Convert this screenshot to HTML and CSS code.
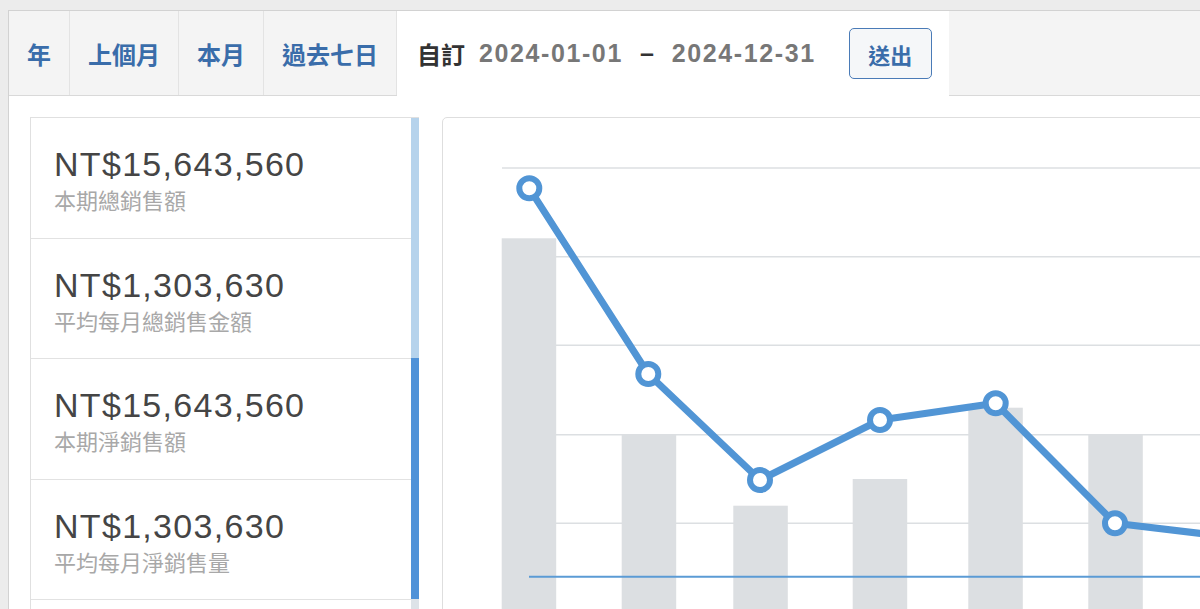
FILE: index.html
```html
<!DOCTYPE html>
<html lang="zh-Hant">
<head>
<meta charset="utf-8">
<title>銷售報表</title>
<link rel="stylesheet" href="styles.css">
</head>
<body>
<div class="panel">
  <nav class="tabs">
    <a class="tab">年</a>
    <a class="tab">上個月</a>
    <a class="tab">本月</a>
    <a class="tab">過去七日</a>
    <div class="tab tab-active">
      <span class="custom-label">自訂</span>
      <span class="date date-from">2024-01-01</span>
      <span class="dash">–</span>
      <span class="date date-to">2024-12-31</span>
      <button class="submit" type="button">送出</button>
    </div>
  </nav>
  <div class="content">
    <div class="stats">
      <ul class="stat-list">
        <li class="stat"><div class="value">NT$15,643,560</div><div class="label">本期總銷售額</div></li>
        <li class="stat"><div class="value">NT$1,303,630</div><div class="label">平均每月總銷售金額</div></li>
        <li class="stat"><div class="value">NT$15,643,560</div><div class="label">本期淨銷售額</div></li>
        <li class="stat"><div class="value">NT$1,303,630</div><div class="label">平均每月淨銷售量</div></li>
      </ul>
      <div class="scrollbar">
        <div class="track-top"></div>
        <div class="thumb"></div>
        <div class="track-rest"></div>
      </div>
    </div>
    <div class="chart-card">
      <svg class="chart" width="880" height="500" viewBox="0 0 880 500">
        <g class="grid" stroke="#dcdfe2" stroke-width="1.5">
          <line x1="59" y1="50" x2="880" y2="50"/>
          <line x1="59" y1="138.7" x2="880" y2="138.7"/>
          <line x1="59" y1="227.3" x2="880" y2="227.3"/>
          <line x1="59" y1="316.7" x2="880" y2="316.7"/>
          <line x1="59" y1="405.2" x2="880" y2="405.2"/>
          <line x1="59" y1="494" x2="880" y2="494"/>
        </g>
        <g class="bars" fill="#dcdfe2">
          <rect x="58.7" y="120.3" width="54.5" height="400"/>
          <rect x="178.7" y="317" width="54.5" height="400"/>
          <rect x="290.3" y="387.7" width="54.5" height="400"/>
          <rect x="409.7" y="361" width="54.5" height="400"/>
          <rect x="525.3" y="289.7" width="54.5" height="400"/>
          <rect x="645.3" y="317" width="54.5" height="400"/>
        </g>
        <line x1="86" y1="458.7" x2="880" y2="458.7" stroke="#5b9bd5" stroke-width="2"/>
        <polyline fill="none" stroke="#5195d5" stroke-width="7" stroke-linejoin="round" stroke-linecap="round"
          points="86.3,70.3 205.3,256 317,362 437,302 552.7,285.3 672,405.3 792,419.5"/>
        <g fill="#fff" stroke="#5195d5" stroke-width="6">
          <circle cx="86.3" cy="70.3" r="10"/>
          <circle cx="205.3" cy="256" r="10"/>
          <circle cx="317" cy="362" r="10"/>
          <circle cx="437" cy="302" r="10"/>
          <circle cx="552.7" cy="285.3" r="10"/>
          <circle cx="672" cy="405.3" r="10"/>
          <circle cx="792" cy="419.5" r="10"/>
        </g>
      </svg>
    </div>
  </div>
</div>
</body>
</html>
```

FILE: styles.css
```css
* {
  box-sizing: border-box;
}

html,
body {
  margin: 0;
  height: 100%;
  overflow: hidden;
}

body {
  background: #ececec;
  padding: 10px 0 0 8px;
  font-family: "Liberation Sans", "Noto Sans CJK TC", sans-serif;
}

.panel {
  width: 1400px;
  height: 640px;
  background: #fff;
  border: 1px solid #d2d2d2;
  display: flex;
  flex-direction: column;
}

/* tabs */
.tabs {
  flex: none;
  display: flex;
  height: 85px;
  background: #f4f4f4;
  border-bottom: 1px solid #d9d9d9;
}

.tab {
  display: flex;
  align-items: center;
  padding: 0 18px;
  border-right: 1px solid #e3e3e3;
  color: #3a6daa;
  font-size: 24px;
  font-weight: 700;
  text-decoration: none;
  white-space: nowrap;
}

.tab-active {
  background: #fff;
  border-right: none;
  height: 85px;
  margin-bottom: -1px;
  padding: 0 17px 0 20px;
  color: #333;
}

.custom-label {
  color: #333;
}

.date {
  color: #777;
  font-size: 25px;
  letter-spacing: 1.6px;
}

.date-from {
  margin-left: 14px;
}

.dash {
  color: #333;
  font-size: 25px;
  margin-left: 17px;
}

.date-to {
  margin-left: 18px;
}

.submit {
  margin-left: 33px;
  width: 83px;
  height: 51px;
  padding: 0;
  border: 1.5px solid #4a7bb7;
  border-radius: 5px;
  background: #f5f7f9;
  color: #3a6daa;
  font-family: "Liberation Sans", "Noto Sans CJK TC", sans-serif;
  font-size: 22px;
  font-weight: 700;
}

/* content */
.content {
  flex: 1;
  min-height: 0;
  display: flex;
  align-items: flex-start;
  gap: 23px;
  padding: 21px 0 0 21px;
}

.stats {
  flex: none;
  display: flex;
  width: 389px;
  height: 520px;
  border-top: 1px solid #e0e0e0;
  border-left: 1px solid #e0e0e0;
}

.stat-list {
  flex: 1;
  margin: 0;
  padding: 0;
  list-style: none;
}

.stat {
  height: 120.5px;
  padding: 26px 0 0 23px;
  border-bottom: 1px solid #e2e2e2;
}

.value {
  color: #454545;
  font-size: 34px;
  line-height: 40px;
  letter-spacing: 1.3px;
}

.label {
  margin-top: 5px;
  color: #a8a8a8;
  font-size: 22px;
  line-height: 26px;
}

.scrollbar {
  flex: none;
  width: 8px;
  display: flex;
  flex-direction: column;
}

.track-top {
  height: 240px;
  background: #b6d3ec;
}

.thumb {
  height: 241px;
  background: #4f92d8;
}

.track-rest {
  flex: 1;
  background: #dde3e8;
}

.chart-card {
  flex: none;
  width: 900px;
  height: 520px;
  border: 1px solid #dedede;
  border-radius: 5px;
  overflow: hidden;
  background: #fff;
}

.chart {
  display: block;
}
```
